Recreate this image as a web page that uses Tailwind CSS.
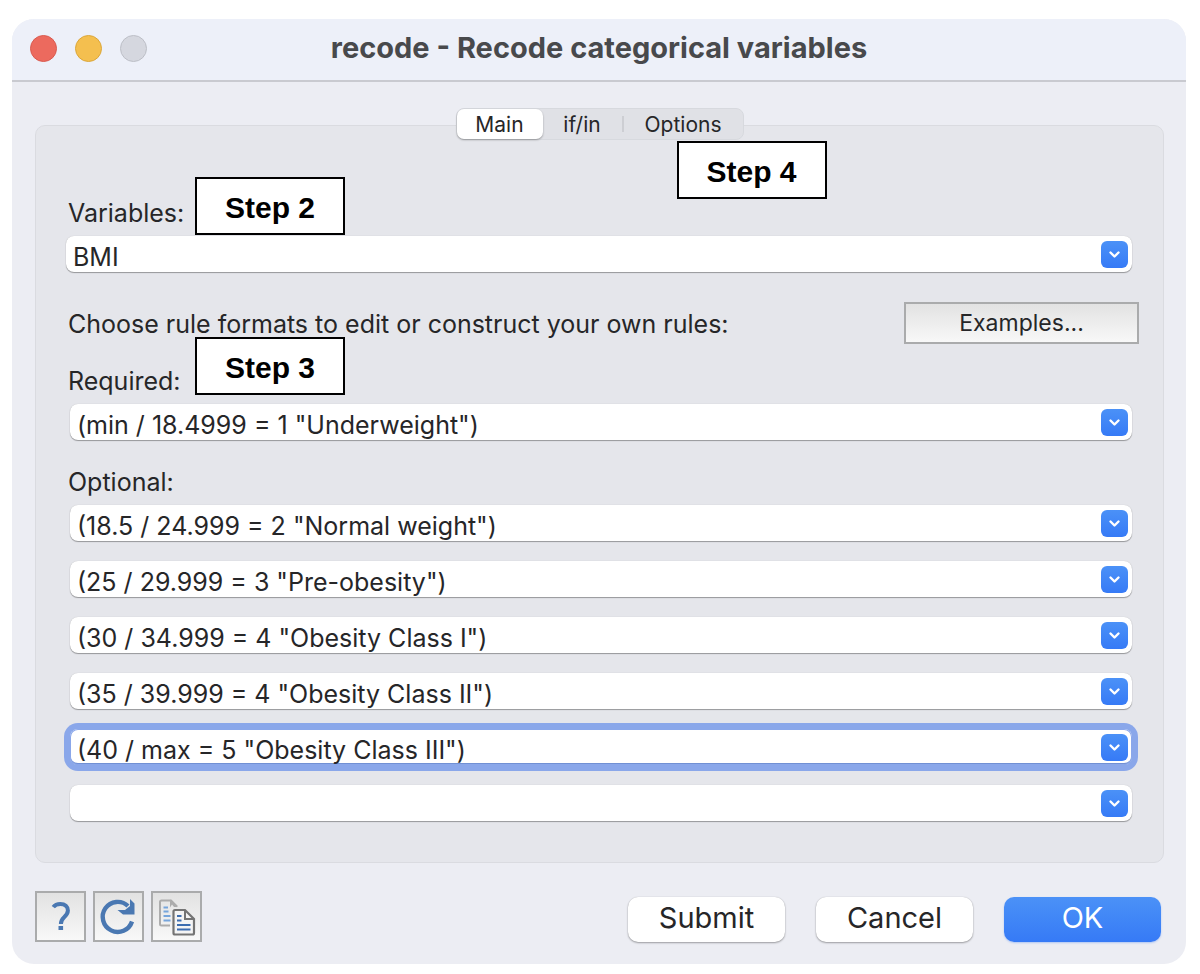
<!DOCTYPE html>
<html lang="en">
<head>
<meta charset="utf-8">
<title>recode - Recode categorical variables</title>
<script src="https://cdn.jsdelivr.net/npm/@tailwindcss/browser@4"></script>
</head>
<body class="bg-white pt-[19px] pr-[14px] pb-[9px] pl-3 font-['Inter',sans-serif] text-[#262628]">
<svg class="hidden">
  <symbol id="chev" viewBox="0 0 27 27"><path d="M9.500 11.500l4 4 4-4" fill="none" stroke="#fff" stroke-width="2.400" stroke-linecap="round" stroke-linejoin="round"/></symbol>
</svg>
<main class="overflow-hidden rounded-[22px] bg-[#ecedf3]">
  <header class="grid h-[63px] grid-cols-[1fr_auto_1fr] items-center border-b-2 border-[#c9cad0] bg-[#edf0f9] pb-0.5">
    <div class="flex gap-[18px] pl-[18px]">
      <button type="button" aria-label="Close" class="size-[27px] rounded-full border border-[#d95a4f] bg-[#ec6a5e]"></button>
      <button type="button" aria-label="Minimize" class="size-[27px] rounded-full border border-[#dba63a] bg-[#f4bf4f]"></button>
      <button type="button" aria-label="Zoom" disabled class="size-[27px] rounded-full border border-[#bcbec6] bg-[#d5d7df]"></button>
    </div>
    <h1 class="pb-0.5 text-[29px] leading-8 font-bold text-[#48494c]">recode - Recode categorical variables</h1>
    <div></div>
  </header>

  <div class="pt-[26px] pr-[22px] pb-[22px] pl-[23px]">
    <nav class="relative z-10 mx-auto -mb-[15px] flex h-8 w-[288px] items-stretch rounded-lg border border-[#d7d9de] bg-[#e0e1e6] text-[21px] leading-6">
      <button type="button" class="w-[86px] rounded-[7px] bg-white pt-0.5 shadow-[0_1px_2px_#0005]">Main</button>
      <button type="button" class="w-[79px] pt-0.5">if/in</button>
      <span class="mt-[7px] h-4 w-0.5 bg-[#cdced3]"></span>
      <button type="button" class="w-[119px] pt-0.5">Options</button>
      <div class="absolute top-8 left-[220px] flex h-[58px] w-[150px] items-center justify-center border-2 border-black bg-white pt-1 font-['Liberation_Sans',sans-serif] text-[30px] leading-8 font-bold text-black">Step 4</div>
    </nav>

    <section class="rounded-[10px] border border-[#dadbe0] bg-[#e5e6eb] pt-[71px] pr-[31px] pb-[41px] pl-[30px] text-[25px] leading-8">
      <div class="relative pl-0.5">
        <label for="vars">Variables:</label>
        <div class="absolute -top-5 left-[129px] flex h-[58px] w-[150px] items-center justify-center border-2 border-black bg-white pt-1 font-['Liberation_Sans',sans-serif] text-[30px] leading-8 font-bold text-black">Step 2</div>
      </div>
      <div class="mt-[7px] flex h-9 items-center rounded-lg bg-white pr-1 shadow-[0_1px_1px_#0005,0_0_1px_#0003]">
        <input id="vars" value="BMI" class="h-9 min-w-0 flex-1 pt-1.5 pl-[7px] outline-none">
        <button type="button" aria-label="Show variables" class="size-[27px] rounded-md bg-linear-to-b from-[#4b91f7] to-[#367af6]"><svg class="size-[27px]"><use href="#chev"/></svg></button>
      </div>

      <div class="-mr-[7px] mt-[30px] flex h-[42px] items-center justify-between pl-0.5">
        <p class="pt-0.5">Choose rule formats to edit or construct your own rules:</p>
        <button type="button" class="h-[42px] w-[235px] border-2 border-[#aaabac] bg-linear-to-b from-[#e2e2e2] to-[#f8f8f8] text-[23px]">Examples...</button>
      </div>

      <div class="relative mt-[21px] pl-0.5">
        <label for="req">Required:</label>
        <div class="absolute -top-7 left-[129px] flex h-[58px] w-[150px] items-center justify-center border-2 border-black bg-white pt-1 font-['Liberation_Sans',sans-serif] text-[30px] leading-8 font-bold text-black">Step 3</div>
      </div>
      <div class="mt-[7px] ml-1 flex h-9 items-center rounded-lg bg-white pr-1 shadow-[0_1px_1px_#0005,0_0_1px_#0003]">
        <input id="req" value='(min / 18.4999 = 1 "Underweight")' class="h-9 min-w-0 flex-1 pt-1.5 pl-[7px] outline-none">
        <button type="button" aria-label="Show rules" class="size-[27px] rounded-md bg-linear-to-b from-[#4b91f7] to-[#367af6]"><svg class="size-[27px]"><use href="#chev"/></svg></button>
      </div>

      <div class="mt-[26px] pl-0.5"><label for="opt1">Optional:</label></div>
      <div class="mt-[7px] ml-1 flex flex-col gap-5">
        <div class="flex h-9 items-center rounded-lg bg-white pr-1 shadow-[0_1px_1px_#0005,0_0_1px_#0003]">
          <input id="opt1" value='(18.5 / 24.999 = 2 "Normal weight")' class="h-9 min-w-0 flex-1 pt-1.5 pl-[7px] outline-none">
          <button type="button" aria-label="Show rules" class="size-[27px] rounded-md bg-linear-to-b from-[#4b91f7] to-[#367af6]"><svg class="size-[27px]"><use href="#chev"/></svg></button>
        </div>
        <div class="flex h-9 items-center rounded-lg bg-white pr-1 shadow-[0_1px_1px_#0005,0_0_1px_#0003]">
          <input aria-label="Optional rule 2" value='(25 / 29.999 = 3 "Pre-obesity")' class="h-9 min-w-0 flex-1 pt-1.5 pl-[7px] outline-none">
          <button type="button" aria-label="Show rules" class="size-[27px] rounded-md bg-linear-to-b from-[#4b91f7] to-[#367af6]"><svg class="size-[27px]"><use href="#chev"/></svg></button>
        </div>
        <div class="flex h-9 items-center rounded-lg bg-white pr-1 shadow-[0_1px_1px_#0005,0_0_1px_#0003]">
          <input aria-label="Optional rule 3" value='(30 / 34.999 = 4 "Obesity Class I")' class="h-9 min-w-0 flex-1 pt-1.5 pl-[7px] outline-none">
          <button type="button" aria-label="Show rules" class="size-[27px] rounded-md bg-linear-to-b from-[#4b91f7] to-[#367af6]"><svg class="size-[27px]"><use href="#chev"/></svg></button>
        </div>
        <div class="flex h-9 items-center rounded-lg bg-white pr-1 shadow-[0_1px_1px_#0005,0_0_1px_#0003]">
          <input aria-label="Optional rule 4" value='(35 / 39.999 = 4 "Obesity Class II")' class="h-9 min-w-0 flex-1 pt-1.5 pl-[7px] outline-none">
          <button type="button" aria-label="Show rules" class="size-[27px] rounded-md bg-linear-to-b from-[#4b91f7] to-[#367af6]"><svg class="size-[27px]"><use href="#chev"/></svg></button>
        </div>
        <div class="flex h-9 items-center rounded-lg bg-white pr-1 shadow-[inset_0_0_0_1px_#8aa7ea,inset_0_-2px_0_#7190d4,0_0_0_6px_#8aa7ea]">
          <input aria-label="Optional rule 5" value='(40 / max = 5 "Obesity Class III")' class="h-9 min-w-0 flex-1 pt-1.5 pl-[7px] outline-none">
          <button type="button" aria-label="Show rules" class="size-[27px] rounded-md bg-linear-to-b from-[#4b91f7] to-[#367af6]"><svg class="size-[27px]"><use href="#chev"/></svg></button>
        </div>
        <div class="flex h-9 items-center rounded-lg bg-white pr-1 shadow-[0_1px_1px_#0005,0_0_1px_#0003]">
          <input aria-label="Optional rule 6" value="" class="h-9 min-w-0 flex-1 pt-1.5 pl-[7px] outline-none">
          <button type="button" aria-label="Show rules" class="size-[27px] rounded-md bg-linear-to-b from-[#4b91f7] to-[#367af6]"><svg class="size-[27px]"><use href="#chev"/></svg></button>
        </div>
      </div>
    </section>

    <footer class="mt-7 flex items-center justify-between">
      <div class="flex gap-[7px]">
        <button type="button" aria-label="Help" class="size-[51px] border-2 border-[#aaabac] bg-linear-to-b from-[#e2e2e2] to-[#f8f8f8]">
          <svg class="size-[47px]" viewBox="0 0 47 47"><path d="M16.300 14.200C18 11.800 20.500 10.900 23.300 10.900c4.700 0 7.600 2.700 7.600 6.600 0 3.200-1.900 5-4 6.900-2 1.800-3 3.200-3 6.600" fill="none" stroke="#4a78b2" stroke-width="4"/><path d="M21.500 33h4.600v4h-4.600z" fill="#4a78b2"/></svg>
        </button>
        <button type="button" aria-label="Reset" class="size-[51px] border-2 border-[#aaabac] bg-linear-to-b from-[#e2e2e2] to-[#f8f8f8]">
          <svg class="size-[47px]" viewBox="0 0 47 47"><path d="M33 13A15 15 0 1 0 37 28.500" fill="none" stroke="#4a78b2" stroke-width="4.400"/><path d="M35 6l4.500 4.500V21.500H28L22.500 17H30L35 13z" fill="#4a78b2"/></svg>
        </button>
        <button type="button" aria-label="Copy command" class="size-[51px] border-2 border-[#aaabac] bg-linear-to-b from-[#e2e2e2] to-[#f8f8f8]">
          <svg class="size-[47px]" viewBox="0 0 47 47" fill="none">
            <path d="M17 32.500H8.500a1.500 1.500 0 0 1-1.500-1.500V9a1.500 1.500 0 0 1 1.500-1.500H18l6 6" stroke="#acacac" stroke-width="2"/>
            <path d="M17 6.500l8 7.500h-4l-2-2.500-2 3z" fill="#acacac"/>
            <path d="M10.500 14.500h4.500M10.500 18.500h5M10.500 23h7M10.500 27.500h7" stroke="#76a5dc" stroke-width="2"/>
            <path d="M20.500 18.500a1.500 1.500 0 0 1 1.500-1.500h10l9 9v14a1.500 1.500 0 0 1-1.500 1.500H22a1.500 1.500 0 0 1-1.500-1.500z" fill="#f4f4f4" stroke="#747474" stroke-width="2.200"/>
            <path d="M32 17v9h9" stroke="#747474" stroke-width="2"/>
            <path d="M24 23h4.500M24 27.500h4.500M24 32h13.500M24 36.500h13.500" stroke="#3c6db0" stroke-width="2"/>
          </svg>
        </button>
      </div>
      <div class="mt-1.5 flex gap-[31px] pr-[3px] text-[29px] leading-8">
        <button type="button" class="h-[45px] w-[157px] rounded-[10px] bg-white pb-1 shadow-[0_1px_2px_#0005,0_0_1px_#0003]">Submit</button>
        <button type="button" class="h-[45px] w-[157px] rounded-[10px] bg-white pb-1 shadow-[0_1px_2px_#0005,0_0_1px_#0003]">Cancel</button>
        <button type="button" class="h-[45px] w-[157px] rounded-[10px] bg-linear-to-b from-[#4b91f7] to-[#367af6] pb-1 text-white shadow-[0_1px_2px_#367af655]">OK</button>
      </div>
    </footer>
  </div>
</main>
</body>
</html>
